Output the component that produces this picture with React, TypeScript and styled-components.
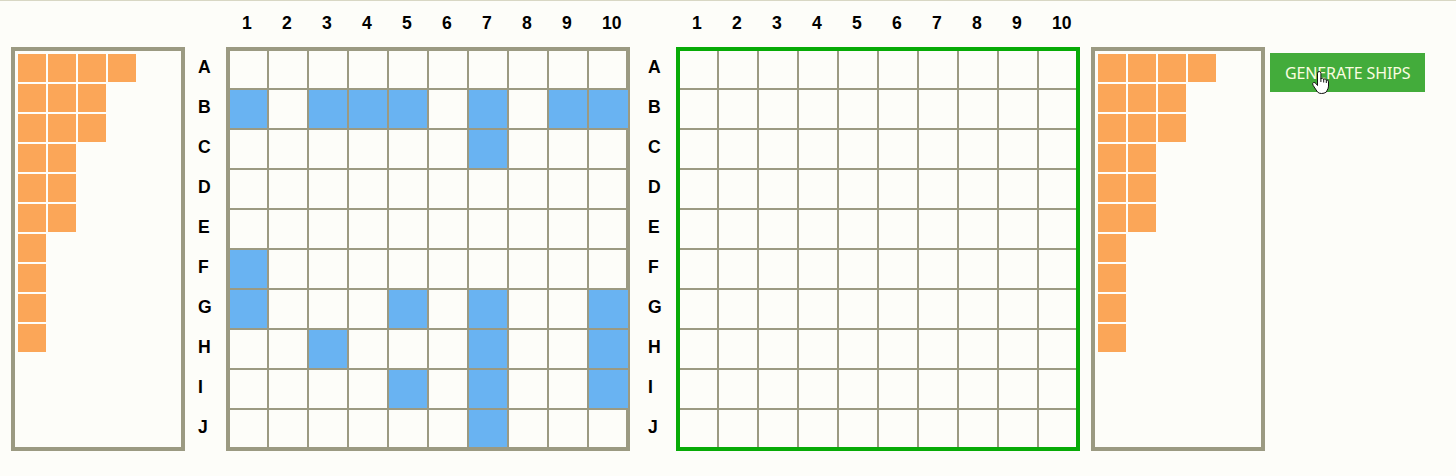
import React from "react";
import styled, { createGlobalStyle } from "styled-components";

const Global = createGlobalStyle`
  * { box-sizing: border-box; }
  body { margin: 0; background: #fdfdf9; overflow: hidden; }
`;

const GRAY = "#9b9a82";

const Page = styled.main`
  display: flex;
  align-items: flex-start;
  width: 1456px;
  height: 476px;
  padding-left: 11px;
  border-top: 1px solid #d8d7c4;
  font-family: "Liberation Sans", Arial, sans-serif;
`;

const Fleet = styled.section`
  display: flex;
  flex-direction: column;
  gap: 2px;
  width: 174px;
  height: 404px;
  margin-top: 46px;
  padding: 3px;
  border: 4px solid ${GRAY};
`;

const Ship = styled.div`
  display: flex;
  gap: 2px;
`;

const Deck = styled.span`
  width: 28px;
  height: 28px;
  background: #fba658;
`;

const Field = styled.section<{ $gutter: number }>`
  display: grid;
  grid-template: 46px 404px / ${(p) => p.$gutter}px 404px;
`;

const Columns = styled.div`
  grid-column: 2;
  display: flex;
  padding-left: 16px;
`;

const Rows = styled.div`
  grid-column: 1;
  display: flex;
  flex-direction: column;
  align-items: flex-end;
`;

const ColumnLabel = styled.span`
  flex: 0 0 40px;
  width: 40px;
  padding-top: 12px;
  font-size: 17.6px;
  line-height: 20px;
  font-weight: bold;
  color: #000;
`;

const RowLabel = styled.span`
  width: 28px;
  height: 40px;
  padding-top: 10px;
  font-size: 17.6px;
  line-height: 20px;
  font-weight: bold;
  color: #000;
`;

const Board = styled.div<{ $active?: boolean }>`
  display: grid;
  grid-template: 39px repeat(8, 40px) 37px / 39px repeat(8, 40px) 37px;
  border: 4px solid ${(p) => (p.$active ? "#07ab07" : GRAY)};
`;

const Cell = styled.div<{ $filled: boolean; $lastCol: boolean; $lastRow: boolean }>`
  border: 0 solid ${GRAY};
  border-right-width: ${(p) => (p.$lastCol ? 0 : 2)}px;
  border-bottom-width: ${(p) => (p.$lastRow ? 0 : 2)}px;
  margin-right: ${(p) => (p.$lastCol && p.$filled ? -2 : 0)}px;
  background: ${(p) => (p.$filled ? "#69b3f2" : "transparent")};
`;

const GenerateButton = styled.button`
  position: relative;
  width: 155px;
  height: 39px;
  margin: 52px 0 0 5px;
  padding: 1px 0 0;
  border: 0;
  background: #43ac3b;
  color: #fbfde0;
  font: 16px/20px "Noto Sans", "Open Sans", sans-serif;
  white-space: nowrap;
`;

const ButtonText = styled.span`
  display: block;
  width: 126px;
  margin-left: 15px;
  text-align: left;
  letter-spacing: -0.12px;
`;

const Pointer = styled.svg`
  position: absolute;
  left: 41px;
  top: 17px;
`;

const SHIPS = [4, 3, 3, 2, 2, 2, 1, 1, 1, 1];
const NUMBERS = [1, 2, 3, 4, 5, 6, 7, 8, 9, 10];
const LETTERS = "ABCDEFGHIJ".split("");
const PLACED = new Set(
  "B1 B3 B4 B5 B7 B9 B10 C7 F1 G1 G5 G7 G10 H3 H7 H10 I5 I7 I10 J7".split(" "),
);
const EMPTY = new Set<string>();

function Ships() {
  return (
    <Fleet>
      {SHIPS.map((size, i) => (
        <Ship key={i}>
          {Array.from({ length: size }, (_, d) => (
            <Deck key={d} />
          ))}
        </Ship>
      ))}
    </Fleet>
  );
}

function BattleField({
  placed,
  gutter,
  active,
}: {
  placed: Set<string>;
  gutter: number;
  active?: boolean;
}) {
  return (
    <Field $gutter={gutter}>
      <Columns>
        {NUMBERS.map((n) => (
          <ColumnLabel key={n}>{n}</ColumnLabel>
        ))}
      </Columns>
      <Rows>
        {LETTERS.map((l) => (
          <RowLabel key={l}>{l}</RowLabel>
        ))}
      </Rows>
      <Board $active={active}>
        {LETTERS.flatMap((l) =>
          NUMBERS.map((n) => (
            <Cell key={l + n} $filled={placed.has(l + n)} $lastCol={n === 10} $lastRow={l === "J"} />
          )),
        )}
      </Board>
    </Field>
  );
}

const TargetFleet = styled.div`
  margin-left: 11px;
`;

export default function App() {
  return (
    <>
      <Global />
      <Page>
        <Ships />
        <BattleField placed={PLACED} gutter={41} />
        <BattleField placed={EMPTY} gutter={46} active />
        <TargetFleet>
          <Ships />
        </TargetFleet>
        <GenerateButton>
          <ButtonText>GENERATE SHIPS</ButtonText>
          <Pointer width="20" height="26" viewBox="0 0 20 26">
            <path
              d="M6.500 15.500V3.200a1.700 1.700 0 0 1 3.400 0V8.500q1.600-.9 2.700.6 1.800-.8 2.600.8 2.300-.4 2.300 2v4.200q0 2.200-1.500 4.400l-.6 1.500q-2.300 1.600-5 1.500-2.500 0-3.900-1.500L2.200 15.500q-1.300-2.200.2-2.900 1.500-.6 3 1.400z"
              fill="#fff"
              stroke="#111"
            />
            <path d="M9.900 8v4M12.700 9v3.500M15.300 10v3" fill="none" stroke="#111" />
          </Pointer>
        </GenerateButton>
      </Page>
    </>
  );
}
